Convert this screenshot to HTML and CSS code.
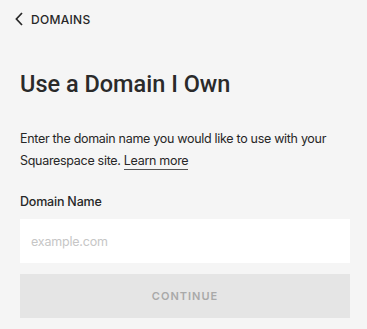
FILE: index.html
```html
<!DOCTYPE html>
<html lang="en">
<head>
    <meta charset="UTF-8">
    <meta name="viewport" content="width=device-width, initial-scale=1.0">
    <title>Use a Domain I Own</title>
    <link rel="stylesheet" href="styles.css">
</head>
<body>
    <div id="panel">
        <div class="top-bar">
            <a class="back-link" href="#">
                <svg class="chevron" width="8" height="14" viewBox="0 0 8 14">
                    <path d="M7 1L1.4 7L7 13" fill="none" stroke="#272727" stroke-width="1.7"/>
                </svg>
                <span>DOMAINS</span>
            </a>
        </div>

        <div class="content">
            <h1>Use a Domain I Own</h1>
            <p class="intro">
                Enter the domain name you would like to use with your
                Squarespace site. <a href="#">Learn more</a>
            </p>

            <form id="domainForm">
                <label for="domainName">Domain Name</label>
                <input type="text" id="domainName" placeholder="example.com">
                <button type="submit" disabled>CONTINUE</button>
            </form>
        </div>
    </div>
</body>
</html>
```

FILE: styles.css
```css
html, body {
  margin: 0;
  height: 100%;
}

body {
  background-color: #f5f5f5;
  font-family: "Inter", "Liberation Sans", sans-serif;
  color: #272727;
}

#panel {
  width: 367px;
}

.top-bar {
  height: 38px;
  display: flex;
  align-items: center;
  padding-left: 15px;
}

.back-link {
  display: flex;
  align-items: center;
  gap: 8px;
  color: #272727;
  text-decoration: none;
  font-size: 12px;
  font-weight: 500;
  letter-spacing: 0.3px;
}

.chevron {
  display: block;
}

.content {
  padding: 0 17px 0 20px;
}

h1 {
  margin: 30px 0 0;
  font-family: "Roboto", "Inter", sans-serif;
  font-size: 23.5px;
  font-weight: 500;
  line-height: 32px;
  letter-spacing: 0;
  color: #2a2a2a;
}

.intro {
  margin: 28px 0 0;
  font-size: 12.5px;
  line-height: 22px;
  letter-spacing: -0.3px;
}

.intro a {
  color: #272727;
  text-decoration: none;
  border-bottom: 1px solid #555;
  padding-bottom: 1px;
}

#domainForm {
  display: flex;
  flex-direction: column;
  margin-top: 22px;
}

label {
  font-size: 12.5px;
  font-weight: 500;
  line-height: 16px;
  letter-spacing: -0.2px;
  margin-bottom: 9px;
}

input {
  height: 44px;
  box-sizing: border-box;
  border: none;
  background-color: #fff;
  padding: 0 11px;
  font-family: inherit;
  font-size: 12.5px;
  letter-spacing: -0.2px;
  color: #272727;
  outline: none;
}

input::placeholder {
  color: #c6c6c6;
}

button {
  margin-top: 11px;
  height: 44px;
  border: none;
  background-color: #e5e5e5;
  color: #a9a9a9;
  font-family: inherit;
  font-size: 11px;
  font-weight: 600;
  letter-spacing: 1px;
}
```
